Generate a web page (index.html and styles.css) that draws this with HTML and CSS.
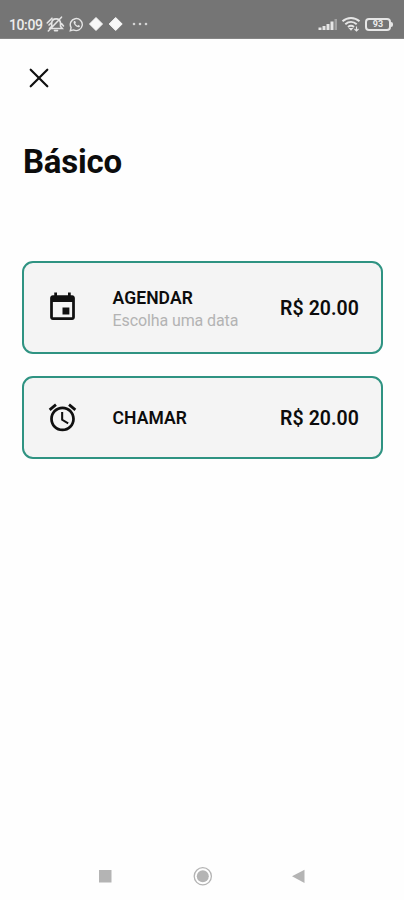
FILE: index.html
```html
<!DOCTYPE html>
<html lang="pt-BR">
<head>
<meta charset="utf-8">
<title>Básico</title>
<link rel="stylesheet" href="styles.css">
</head>
<body>
<header class="status">
  <span class="time">10:09</span>
  <svg class="muted" width="19" height="18" viewBox="0 0 19 18" fill="none" stroke="#e4e4e4" stroke-width="1.600" stroke-linecap="round"><path d="M3.500 13.500h12.800l-1.800-2.300V8.400C14.500 5.600 12.700 3.900 10.200 3.900S5.700 5.600 5.700 8.400v2.800L3.500 13.500M8.500 15.600h3M2.300 16 15.500 2.200M1.200 8 6 3.200M3 10l2-2M15.500 8.500l2 2.500"/></svg>
  <svg class="chat" width="15" height="15" viewBox="0 0 15 15"><path d="M1.300 13.700 2.100 10.600A6 6 0 1 1 4.500 12.900Z" fill="none" stroke="#e4e4e4" stroke-width="1.400"/><path d="M5.200 4.100c-1.300 1-.5 3 1 4.500s3.500 2.300 4.500 1.100c.5-.7.200-1-.3-1.300l-1-.5-.8.8C7.500 8.300 6.700 7.500 6.300 6.500l.6-.8-.5-1.300c-.2-.4-.7-.6-1.200-.3z" fill="#e4e4e4"/></svg>
  <svg class="diamonds" width="36" height="16" viewBox="0 0 36 16" fill="#f7f7f7" stroke="#f7f7f7" stroke-linejoin="round"><path d="M8 1.500 14.500 8 8 14.500 1.500 8ZM27.700 1.500 34.200 8 27.700 14.500 21.200 8Z"/></svg>
  <svg class="dots" width="16" height="4" viewBox="0 0 16 4" fill="#d4d4d4"><circle cx="2" cy="2" r="1.300"/><circle cx="8" cy="2" r="1.300"/><circle cx="14" cy="2" r="1.300"/></svg>
  <span class="spacer"></span>
  <svg class="signal" width="20" height="13" viewBox="0 0 20 13" fill="#e6e6e6"><path d="M.5 9.500h3V12h-3zM4.500 8h3v4h-3zM8.500 6h3v6h-3zM12.500 3.500h3V12h-3z"/><path d="M16.500 1h2.500v11h-2.500z" opacity=".4"/></svg>
  <svg class="wifi" width="20" height="16" viewBox="0 0 20 16" fill="none" stroke="#e6e6e6" stroke-width="2"><path d="M1.500 5.300c5-4.400 12-4.400 17 0M4.300 8.300c3.500-3 8-3 11.400 0M7 11c2-1.600 4-1.600 6 0"/><path d="M7.500 12h5L10 14.800z" fill="#e6e6e6" stroke="none"/><path d="M15.500 10.500V15M13.500 13l2 2 2-2" stroke-width="1.100"/></svg>
  <span class="battery"><b>93</b></span>
</header>
<main>
  <svg class="close" width="22" height="22" viewBox="0 0 22 22" fill="none" stroke="#101010" stroke-width="2.200" stroke-linecap="round"><path d="m2.700 2.700 16.600 16.600M19.300 2.700 2.700 19.300"/></svg>
  <h1>Básico</h1>
  <section class="options">
    <div class="card tall">
      <svg class="icon" width="33" height="33" viewBox="0 0 24 24" fill="#101010"><path d="M17 12h-5v5h5v-5zM16 1v2H8V1H6v2H5c-1.110 0-1.990.9-1.990 2L3 19c0 1.100.89 2 2 2h14c1.100 0 2-.9 2-2V5c0-1.100-.9-2-2-2h-1V1h-2zm3 18H5V8h14v11z"/></svg>
      <div class="text"><div class="name">AGENDAR</div><div class="hint">Escolha uma data</div></div>
      <div class="price">R$ 20.00</div>
    </div>
    <div class="card short">
      <svg class="icon" width="33" height="33" viewBox="0 0 24 24" fill="#101010"><path d="M22 5.720l-4.600-3.860-1.290 1.530 4.600 3.860L22 5.720zM7.880 3.390L6.600 1.860 2 5.710l1.290 1.530 4.590-3.850zM12.500 8H11v6l4.750 2.850.75-1.230-4-2.370V8zM12 4c-4.970 0-9 4.030-9 9s4.020 9 9 9c4.970 0 9-4.030 9-9s-4.030-9-9-9zm0 16c-3.870 0-7-3.130-7-7s3.130-7 7-7 7 3.130 7 7-3.130 7-7 7z"/></svg>
      <div class="text"><div class="name">CHAMAR</div></div>
      <div class="price">R$ 20.00</div>
    </div>
  </section>
</main>
<footer class="nav">
  <svg width="220" height="20" viewBox="0 0 220 20" fill="#b4b4b4"><path d="M7 4h12.500v12.500H7z"/><circle cx="110.800" cy="10.300" r="6"/><circle cx="110.800" cy="10.300" r="8.600" fill="none" stroke="#b4b4b4" stroke-width="1.300"/><path d="M212.500 3.700v13.300L200 10.300z"/></svg>
</footer>
</body>
</html>
```
FILE: styles.css
```css
* { box-sizing: border-box; }
body {
  margin: 0;
  height: 900px;
  display: flex;
  flex-direction: column;
  background: #fefefe;
  color: #0c0c0c;
  font-family: Roboto, "Liberation Sans", sans-serif;
}
.status {
  height: 39px;
  padding: 10px 11px 0 9px;
  display: flex;
  align-items: center;
  background: #757575;
  border-bottom: 1px solid #858585;
  color: #ececec;
}
.time { width: 36px; padding-top: 2px; font-size: 14px; line-height: 18px; font-weight: 500; letter-spacing: -.4px; white-space: nowrap; }
.muted { margin-left: 1px; }
.chat { margin-left: 4px; }
.diamonds { margin-left: 4px; }
.dots { margin-left: 8px; }
.spacer { flex: 1; }
.wifi { margin: 0 4px 0 3px; }
.battery {
  position: relative;
  width: 26px;
  height: 13px;
  margin-right: 2px;
  border: 2px solid #e6e6e6;
  border-radius: 4px;
  display: flex;
  align-items: center;
  justify-content: center;
  font-size: 9px;
}
.battery::after {
  content: "";
  position: absolute;
  right: -4px;
  top: 2px;
  width: 2px;
  height: 5px;
  border-radius: 0 2px 2px 0;
  background: #e6e6e6;
}
main { flex: 1; padding: 28px 21px 0 22px; }
.close { display: block; margin-left: 6px; }
h1 { margin: 53px 0 0 1px; font-size: 33px; line-height: 40px; font-weight: 700; letter-spacing: -.2px; }
.options { margin-top: 79px; display: grid; gap: 22px; }
.card {
  display: flex;
  align-items: center;
  padding: 0 22px;
  border: 2px solid #2f9382;
  border-radius: 11px;
  background: #f4f4f4;
}
.tall { height: 93px; }
.short { height: 83px; }
.text { flex: 1; margin-left: 33.5px; padding-top: 1px; }
.tall .text { padding-top: 3px; }
.name { font-size: 17.5px; line-height: 22px; font-weight: 600; letter-spacing: .1px; }
.hint { font-size: 16px; line-height: 23px; letter-spacing: -.1px; color: #b3b3b3; }
.price { padding-top: 3px; font-size: 19.5px; line-height: 24px; font-weight: 600; letter-spacing: .05px; }
.nav { height: 48px; padding: 14px 0 0 92px; }
.nav svg { display: block; }
```
